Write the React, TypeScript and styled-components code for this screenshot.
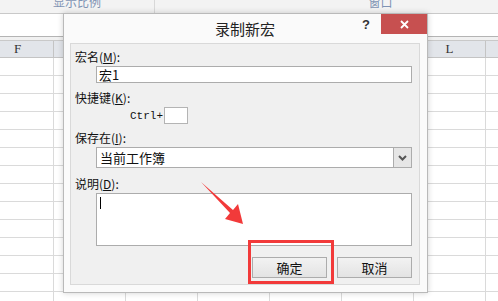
import React from 'react'
import styled, { createGlobalStyle } from 'styled-components'

const GlobalStyle = createGlobalStyle`
  html, body {
    margin: 0;
    padding: 0;
    background: #ffffff;
  }
  * {
    box-sizing: border-box;
  }
`

const cjk = `"Noto Sans CJK SC", "Liberation Sans", sans-serif`

const Screen = styled.div`
  position: relative;
  width: 498px;
  height: 301px;
  overflow: hidden;
  background: #ffffff;
  font-family: ${cjk};
`

const Sheet = styled.div`
  display: flex;
  flex-direction: column;
`

const Ribbon = styled.div`
  display: flex;
  height: 14px;
  background: #f3f3f3;
  border-bottom: 1px solid #c9c9c9;
  overflow: hidden;
`

const RibbonGroup = styled.div<{ width: number }>`
  width: ${({ width }) => width}px;
  flex-shrink: 0;
  border-right: 1px solid #d8d8d8;
  display: flex;
  justify-content: center;
  font-size: 12px;
  line-height: 14px;
  color: #7f93b4;
  span {
    margin-top: -5px;
  }
`

const FormulaBar = styled.div`
  height: 23px;
  background: #ffffff;
  border-bottom: 1px solid #b4b4b4;
`

const Spacer = styled.div`
  height: 3px;
  background: #f1f1f1;
`

const GridRow = styled.div<{ header?: boolean }>`
  display: flex;
  margin-left: -18px;
  height: 18px;
  background: ${({ header }) => (header ? '#e2e5ea' : '#ffffff')};
  border-top: ${({ header }) => (header ? '1px solid #c9c9c9' : 'none')};
`

const Cell = styled.div<{ header?: boolean }>`
  width: 72px;
  flex-shrink: 0;
  border-right: 1px solid ${({ header }) => (header ? '#c4c4c4' : '#dadada')};
  border-bottom: 1px solid ${({ header }) => (header ? '#c4c4c4' : '#dadada')};
  display: flex;
  align-items: center;
  justify-content: center;
  font-family: "Liberation Serif", serif;
  font-size: 13px;
  color: #333;
`

const Dialog = styled.div`
  position: absolute;
  left: 63px;
  top: 13px;
  width: 365px;
  height: 280px;
  background: #fafafa;
  border: 1px solid #b9b9b9;
  box-shadow: 0 0 6px rgba(0, 0, 0, 0.18);
  display: flex;
  flex-direction: column;
  padding: 0 7px 7px 6px;
`

const TitleBar = styled.div`
  position: relative;
  height: 29px;
  display: flex;
  align-items: center;
  justify-content: center;
  font-size: 15px;
  color: #222;
  flex-shrink: 0;
`

const TitleButtons = styled.div`
  position: absolute;
  right: -7px;
  top: 0;
  display: flex;
  align-items: flex-start;
`

const Help = styled.span`
  font-family: "Liberation Sans", sans-serif;
  font-weight: bold;
  font-size: 13px;
  color: #333;
  margin: 3px 11px 0 0;
`

const CloseButton = styled.div`
  width: 46px;
  height: 20px;
  background: #c75050;
  color: #fff;
  display: flex;
  align-items: center;
  justify-content: center;
`

const Panel = styled.div`
  flex: 1;
  background: #f0f0f0;
  border: 1px solid #d9d9d9;
  display: flex;
  flex-direction: column;
  padding: 6px 7px 0 4px;
`

const Label = styled.div<{ gap?: number }>`
  font-size: 12px;
  line-height: 14px;
  height: 14px;
  color: #111;
  margin-top: ${({ gap }) => gap ?? 0}px;
  margin-bottom: 2px;
  white-space: nowrap;
  u {
    text-underline-offset: 1px;
  }
`

const Field = styled.div<{ height: number }>`
  margin-left: 21px;
  height: ${({ height }) => height}px;
  background: #fff;
  border: 1px solid #acacac;
  display: flex;
  align-items: center;
  font-size: 13px;
  color: #111;
  padding-left: 2px;
`

const SelectText = styled.div`
  flex: 1;
  padding-left: 1px;
`

const DropButton = styled.div`
  width: 18px;
  height: 100%;
  background: #e6e6e6;
  border-left: 1px solid #acacac;
  display: flex;
  align-items: center;
  justify-content: center;
`

const TextArea = styled(Field)`
  align-items: flex-start;
  padding: 3px 0 0 3px;
`

const Caret = styled.div`
  width: 1px;
  height: 12px;
  background: #000;
`

const ShortcutRow = styled.div`
  display: flex;
  align-items: center;
  margin-left: 55px;
  gap: 1px;
  height: 17px;
  font-family: "Liberation Mono", monospace;
  font-size: 11px;
  color: #111;
`

const KeyBox = styled.div`
  width: 24px;
  height: 17px;
  background: #fff;
  border: 1px solid #b4b4b4;
`

const Buttons = styled.div`
  display: flex;
  justify-content: flex-end;
  gap: 10px;
  margin-top: 11px;
`

const Button = styled.div`
  width: 75px;
  height: 21px;
  border: 1px solid #acacac;
  background: linear-gradient(#f2f2f2, #e3e3e3);
  display: flex;
  align-items: center;
  justify-content: center;
  font-size: 13px;
  color: #111;
`

const Highlight = styled.div`
  position: absolute;
  left: 248px;
  top: 240px;
  width: 86px;
  height: 44px;
  border: 3px solid #f23a3a;
`

const Arrow = styled.svg`
  position: absolute;
  left: 0;
  top: 0;
`

const columns = ['F', 'G', 'H', 'I', 'J', 'K', 'L', 'M']
const visible = ['F', 'L']

export default function App() {
  return (
    <Screen>
      <GlobalStyle />
      <Sheet>
        <Ribbon>
          <RibbonGroup width={155}>
            <span>显示比例</span>
          </RibbonGroup>
          <RibbonGroup width={452}>
            <span>窗口</span>
          </RibbonGroup>
        </Ribbon>
        <FormulaBar />
        <Spacer />
        <GridRow header>
          {columns.map((c) => (
            <Cell header key={c}>
              {visible.includes(c) ? c : ''}
            </Cell>
          ))}
        </GridRow>
        {Array.from({ length: 14 }).map((_, r) => (
          <GridRow key={r}>
            {columns.map((c) => (
              <Cell key={c} />
            ))}
          </GridRow>
        ))}
      </Sheet>

      <Dialog>
        <TitleBar>
          录制新宏
          <TitleButtons>
            <Help>?</Help>
            <CloseButton>
              <svg width="9" height="9" viewBox="0 0 9 9">
                <path d="M1 1 L8 8 M8 1 L1 8" stroke="#fff" strokeWidth="1.8" />
              </svg>
            </CloseButton>
          </TitleButtons>
        </TitleBar>
        <Panel>
          <Label>
            宏名(<u>M</u>):
          </Label>
          <Field height={17}>宏1</Field>
          <Label gap={8}>
            快捷键(<u>K</u>):
          </Label>
          <ShortcutRow>
            Ctrl+
            <KeyBox />
          </ShortcutRow>
          <Label gap={7}>
            保存在(<u>I</u>):
          </Label>
          <Field height={21}>
            <SelectText>当前工作簿</SelectText>
            <DropButton>
              <svg width="9" height="6" viewBox="0 0 9 6">
                <path d="M1 1 L4.5 4.5 L8 1" stroke="#555" strokeWidth="2" fill="none" />
              </svg>
            </DropButton>
          </Field>
          <Label gap={9}>
            说明(<u>D</u>):
          </Label>
          <TextArea height={53}>
            <Caret />
          </TextArea>
          <Buttons>
            <Button>确定</Button>
            <Button>取消</Button>
          </Buttons>
        </Panel>
      </Dialog>

      <Highlight />
      <Arrow width="498" height="301" viewBox="0 0 498 301">
        <polygon points="201,182 233,210 238,204 243,224 225,219 230,213" fill="#f23a3a" />
      </Arrow>
    </Screen>
  )
}
